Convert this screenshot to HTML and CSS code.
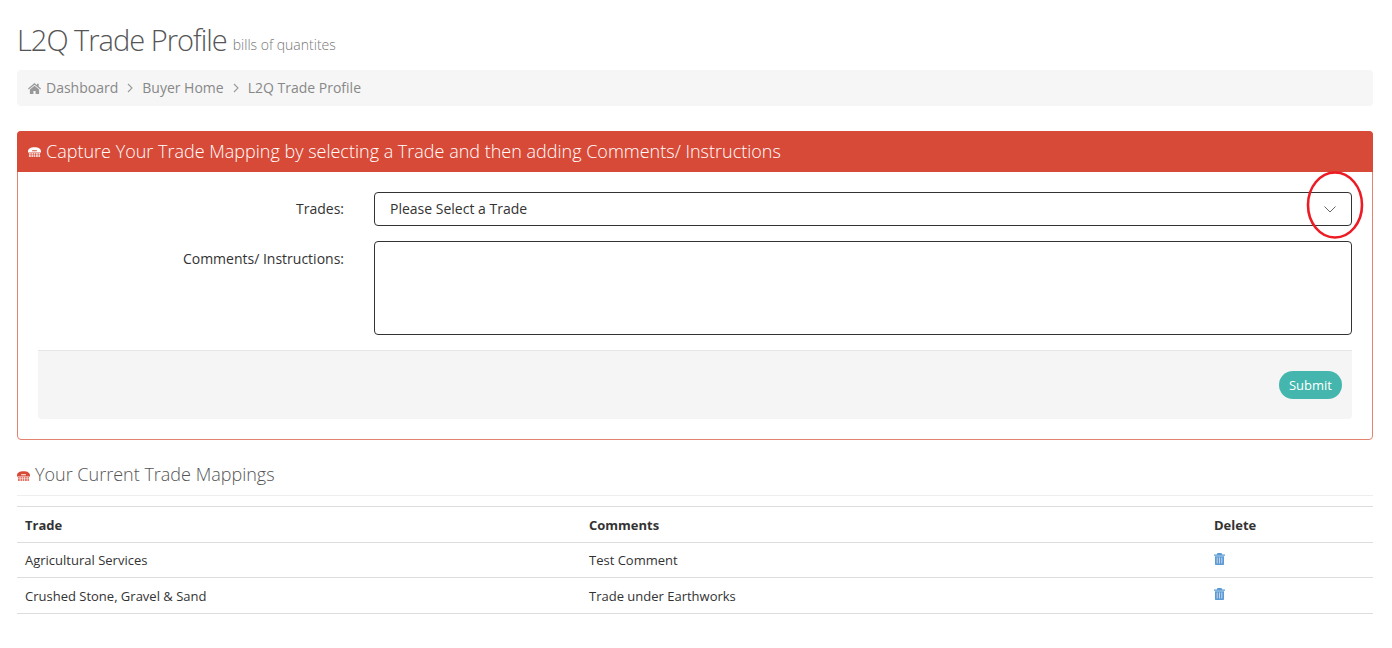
FILE: index.html
```html
<!DOCTYPE html>
<html lang="en">
<head>
<meta charset="utf-8">
<title>L2Q Trade Profile</title>
<link rel="stylesheet" href="styles.css">
</head>
<body>
<div class="page">
  <h1 class="page-title"><span class="title-text">L2Q Trade Profile</span> <small>bills of quantites</small></h1>
  <ul class="breadcrumb">
    <li class="crumb"><svg class="home" viewBox="0 0 24 20"><path d="M12 0 0 10.200l1.300 1.500L12 3.200l10.700 8.500 1.300-1.500-4.300-3.700V1h-3v3.100zM3.500 12V20h6.500v-5.500h4V20h6.500v-8L12 5z"/></svg>Dashboard</li>
    <li class="sep"><svg viewBox="0 0 6 10"><path d="M1 1l4 4-4 4" fill="none" stroke="#9a9a9a" stroke-width="1.100"/></svg></li>
    <li class="crumb">Buyer Home</li>
    <li class="sep"><svg viewBox="0 0 6 10"><path d="M1 1l4 4-4 4" fill="none" stroke="#9a9a9a" stroke-width="1.100"/></svg></li>
    <li class="crumb">L2Q Trade Profile</li>
  </ul>
  <section class="panel">
    <header class="panel-head">
      <svg class="phone" viewBox="0 0 14 10"><path fill="currentColor" fill-rule="evenodd" d="M0 4.500C0 1.500 3 0 7 0s7 1.500 7 4.500V5.500H0zM4.500 3h5v1.200h-5zM1 6.400h2v1.400H1zm2.700 0h2v1.400h-2zm2.600 0h1.600v1.400H6.300zm2.300 0h2v1.400h-2zm2.600 0H13v1.400h-1.800zM1 8.500h2V10H1zm2.700 0h2V10h-2zm2.600 0h1.600V10H6.300zm2.300 0h2V10h-2zm2.600 0H13V10h-1.800z"/></svg>
      <span class="head-text">Capture Your Trade Mapping by selecting a Trade and then adding Comments/ Instructions</span>
    </header>
    <form class="panel-body">
      <div class="row">
        <label class="label">Trades:</label>
        <div class="select"><span class="select-text">Please Select a Trade</span>
          <svg viewBox="0 0 12 7"><path d="M.5.500 6 6 11.500.500" fill="none" stroke="#666" stroke-width="1"/></svg>
        </div>
      </div>
      <div class="row">
        <label class="label label-low">Comments/ Instructions:</label>
        <div class="textarea"></div>
      </div>
      <div class="actions"><button type="button" class="submit">Submit</button></div>
    </form>
  </section>
  <h2 class="section-title">
    <svg class="phone" viewBox="0 0 14 10"><path fill="currentColor" fill-rule="evenodd" d="M0 4.500C0 1.500 3 0 7 0s7 1.500 7 4.500V5.500H0zM4.500 3h5v1.200h-5zM1 6.400h2v1.400H1zm2.700 0h2v1.400h-2zm2.600 0h1.600v1.400H6.300zm2.300 0h2v1.400h-2zm2.600 0H13v1.400h-1.800zM1 8.500h2V10H1zm2.700 0h2V10h-2zm2.600 0h1.600V10H6.300zm2.300 0h2V10h-2zm2.600 0H13V10h-1.800z"/></svg>
    <span>Your Current Trade Mappings</span>
  </h2>
  <table class="table">
    <thead><tr><th class="c1">Trade</th><th class="c2">Comments</th><th>Delete</th></tr></thead>
    <tbody>
      <tr><td>Agricultural Services</td><td>Test Comment</td><td><svg class="trash" viewBox="0 0 11 12"><path fill="#5b9bd5" d="M3.500 0h4l.7 1.500H11v1.200H0V1.500h2.800zM1 3.300h9V11c0 .6-.4 1-1 1H2c-.6 0-1-.4-1-1z"/><path stroke="#c9d6ea" d="M3.200 4.500v6M5.500 4.500v6M7.800 4.500v6"/></svg></td></tr>
      <tr class="last"><td>Crushed Stone, Gravel &amp; Sand</td><td>Trade under Earthworks</td><td><svg class="trash" viewBox="0 0 11 12"><path fill="#5b9bd5" d="M3.500 0h4l.7 1.500H11v1.200H0V1.500h2.800zM1 3.300h9V11c0 .6-.4 1-1 1H2c-.6 0-1-.4-1-1z"/><path stroke="#c9d6ea" d="M3.200 4.500v6M5.500 4.500v6M7.800 4.500v6"/></svg></td></tr>
    </tbody>
  </table>
</div>
<svg class="annotation" viewBox="0 0 60 70"><ellipse cx="30" cy="35" rx="27" ry="32.500" fill="none" stroke="#ed1c24" stroke-width="2.600"/></svg>
</body>
</html>
```
FILE: styles.css
```css
* { box-sizing: border-box; }
html, body { margin: 0; background: #fff; }
body { font-family: "Open Sans", sans-serif; font-size: 13px; color: #333; position: relative; height: 648px; overflow: hidden; }
.page { padding: 20px 19px 0 17px; }
.page-title { margin: 0 0 20px; font-size: 14px; line-height: 40px; font-weight: 400; color: #666; height: 30px; display: flex; align-items: baseline; gap: 6px; }
.title-text { font-size: 29px; font-weight: 300; letter-spacing: -1px; color: #555; }
.page-title small { font-size: 14px; font-weight: 300; color: #777; position: relative; top: -1px; }
.breadcrumb { list-style: none; margin: 0 0 25px; padding: 0 11px; height: 36px; background: #f6f6f6; border-radius: 4px; display: flex; align-items: center; font-size: 14px; color: #888; gap: 9px; }
.crumb { position: relative; top: -1px; }
.breadcrumb .home { width: 13px; height: 11px; fill: #999; margin-right: 5px; position: relative; top: 1px; }
.sep { display: flex; }
.sep svg { width: 6px; height: 10px; }
.panel { border: 1px solid #e2826f; border-radius: 4px; height: 309px; }
.panel-head { background: #d84a38; color: #fff; height: 41px; margin: -1px -1px 0; border-radius: 4px 4px 0 0; padding: 0 11px; display: flex; align-items: center; gap: 5px; font-size: 18px; font-weight: 300; }
.head-text { position: relative; top: -1px; }
.panel-head .phone { width: 13px; height: 10px; margin-top: 1px; flex: none; }
.panel-body { padding: 20px 20px 0; }
.row { display: flex; align-items: flex-start; margin-bottom: 15px; }
.label { width: 306px; flex: none; text-align: right; font-size: 14px; line-height: 34px; height: 34px; color: #333; }
.label-low { padding-top: 1px; }
.select, .textarea { margin-left: 30px; flex: 1; border: 1px solid #333; border-radius: 4px; }
.select { height: 34px; display: flex; align-items: center; justify-content: space-between; padding: 0 15px; font-size: 14px; color: #333; }
.select-text { position: relative; top: -1px; }
.select svg { width: 12px; height: 7px; }
.textarea { height: 94px; }
.actions { background: #f5f5f5; border-top: 1px solid #e5e5e5; border-radius: 0 0 4px 4px; height: 69px; display: flex; align-items: center; justify-content: flex-end; padding: 0 10px; }
.submit { background: #44b6ae; border: 0; color: #fff; font: 400 13px "Open Sans", sans-serif; height: 28px; width: 63px; border-radius: 14px; padding: 0; }
.section-title { margin: 22px 0 0; height: 34px; padding-bottom: 10px; border-bottom: 1px solid #eee; display: flex; align-items: center; gap: 5px; font-size: 18px; font-weight: 300; color: #555; }
.section-title .phone { width: 13px; height: 10px; color: #d84a38; margin-top: 4px; flex: none; }
.table { width: 100%; margin-top: 10px; border-collapse: collapse; font-size: 13px; table-layout: fixed; }
.table th, .table td { text-align: left; padding: 0 8px; border-top: 1px solid #ddd; border-bottom: 1px solid #ddd; }
.table th { height: 36px; font-weight: 700; }
.table td { height: 35px; }
.table .last td { height: 36px; }
.c1 { width: 564px; }
.c2 { width: 625px; }
.trash { width: 11px; height: 12px; display: block; margin-top: -3px; }
.annotation { position: absolute; left: 1305px; top: 170px; width: 60px; height: 70px; }
```
